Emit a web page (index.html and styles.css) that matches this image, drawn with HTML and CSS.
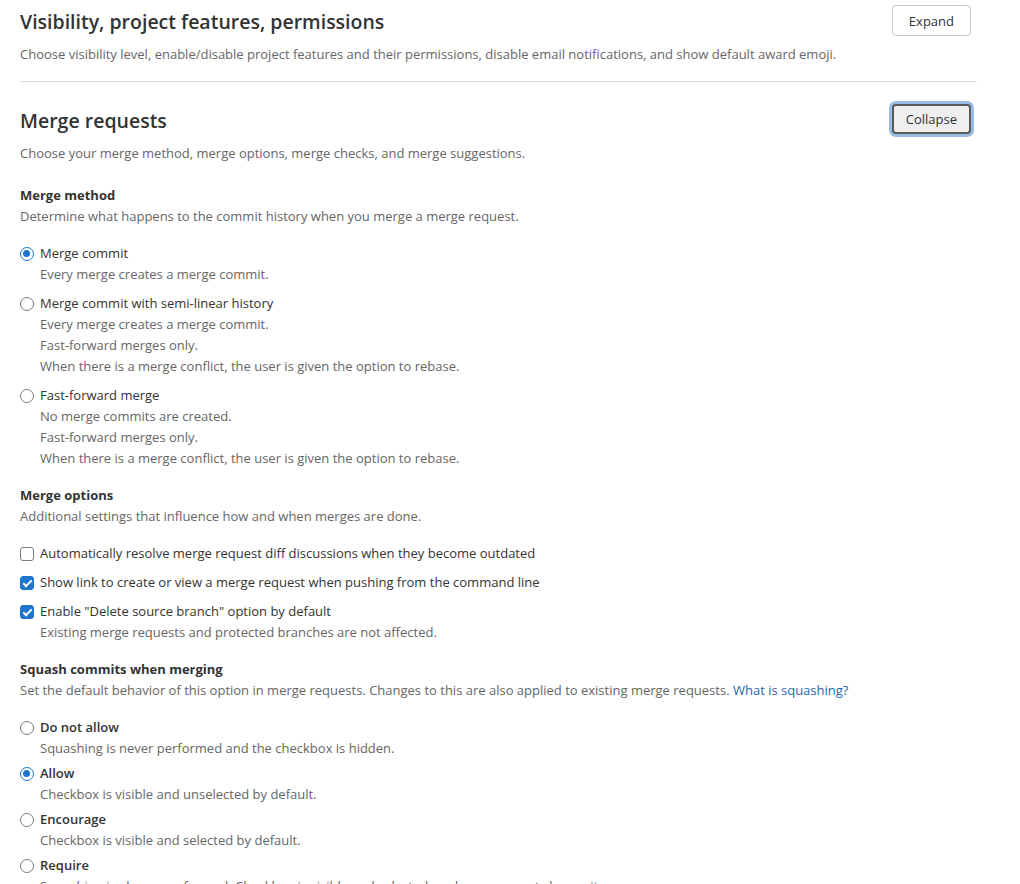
FILE: index.html
```html
<!DOCTYPE html>
<html lang="en">
<head>
    <meta charset="UTF-8">
    <meta name="viewport" content="width=device-width, initial-scale=1.0">
    <title>Merge requests settings</title>
    <link rel="stylesheet" href="styles.css">
</head>
<body>

    <section class="settings">
        <div class="settings-header">
            <div>
                <h4>Visibility, project features, permissions</h4>
                <p class="help">Choose visibility level, enable/disable project features and their permissions, disable email notifications, and show default award emoji.</p>
            </div>
            <button class="button">Expand</button>
        </div>
    </section>

    <section class="settings expanded">
        <div class="settings-header">
            <div>
                <h4>Merge requests</h4>
                <p class="help">Choose your merge method, merge options, merge checks, and merge suggestions.</p>
            </div>
            <button class="button focused">Collapse</button>
        </div>

        <div class="group">
            <div class="legend">Merge method</div>
            <p class="help">Determine what happens to the commit history when you merge a merge request.</p>
            <div class="options">
                <div class="option">
                    <span class="radio checked"></span>
                    <div>
                        <div class="label">Merge commit</div>
                        <p class="help">Every merge creates a merge commit.</p>
                    </div>
                </div>
                <div class="option">
                    <span class="radio"></span>
                    <div>
                        <div class="label">Merge commit with semi-linear history</div>
                        <p class="help">Every merge creates a merge commit.</p>
                        <p class="help">Fast-forward merges only.</p>
                        <p class="help">When there is a merge conflict, the user is given the option to rebase.</p>
                    </div>
                </div>
                <div class="option">
                    <span class="radio"></span>
                    <div>
                        <div class="label">Fast-forward merge</div>
                        <p class="help">No merge commits are created.</p>
                        <p class="help">Fast-forward merges only.</p>
                        <p class="help">When there is a merge conflict, the user is given the option to rebase.</p>
                    </div>
                </div>
            </div>
        </div>

        <div class="group">
            <div class="legend">Merge options</div>
            <p class="help">Additional settings that influence how and when merges are done.</p>
            <div class="options">
                <div class="option">
                    <span class="checkbox"></span>
                    <div>
                        <div class="label">Automatically resolve merge request diff discussions when they become outdated</div>
                    </div>
                </div>
                <div class="option">
                    <span class="checkbox checked"></span>
                    <div>
                        <div class="label">Show link to create or view a merge request when pushing from the command line</div>
                    </div>
                </div>
                <div class="option">
                    <span class="checkbox checked"></span>
                    <div>
                        <div class="label">Enable "Delete source branch" option by default</div>
                        <p class="help">Existing merge requests and protected branches are not affected.</p>
                    </div>
                </div>
            </div>
        </div>

        <div class="group">
            <div class="legend">Squash commits when merging</div>
            <p class="help">Set the default behavior of this option in merge requests. Changes to this are also applied to existing merge requests. <a href="#">What is squashing?</a></p>
            <div class="options tight">
                <div class="option">
                    <span class="radio"></span>
                    <div>
                        <div class="label strong">Do not allow</div>
                        <p class="help">Squashing is never performed and the checkbox is hidden.</p>
                    </div>
                </div>
                <div class="option">
                    <span class="radio checked"></span>
                    <div>
                        <div class="label strong">Allow</div>
                        <p class="help">Checkbox is visible and unselected by default.</p>
                    </div>
                </div>
                <div class="option">
                    <span class="radio"></span>
                    <div>
                        <div class="label strong">Encourage</div>
                        <p class="help">Checkbox is visible and selected by default.</p>
                    </div>
                </div>
                <div class="option">
                    <span class="radio"></span>
                    <div>
                        <div class="label strong">Require</div>
                        <p class="help">Squashing is always performed. Checkbox is visible and selected, and users cannot change it.</p>
                    </div>
                </div>
            </div>
        </div>
    </section>

</body>
</html>
```

FILE: styles.css
```css
body {
    font-family: "Open Sans", "Noto Sans", sans-serif;
    font-size: 13px;
    line-height: 21px;
    color: #333;
    margin: 0;
    padding: 0 43px 0 20px;
    background: #fff;
}

p {
    margin: 0;
}

.settings {
    border-bottom: 1px solid #dcdcde;
    padding: 8px 0 16px;
}

.settings.expanded {
    border-bottom: none;
    padding-top: 25px;
}

.settings-header {
    display: flex;
    justify-content: space-between;
    align-items: flex-start;
}

.settings-header h4 {
    font-size: 19.5px;
    font-weight: 600;
    line-height: 28px;
    margin: 0 0 8px;
    color: #333;
}

.help {
    color: #666;
}

.help a {
    color: #1f68b3;
    text-decoration: none;
}

.button {
    font-family: inherit;
    font-size: 13px;
    color: #333;
    background: #fff;
    border: 1px solid #c8c8c8;
    border-radius: 4px;
    padding: 0 16px;
    height: 31px;
    margin: -3px 6px 0 0;
    cursor: pointer;
}

.button.focused {
    background: #efefef;
    border: 2px solid #5a5a5a;
    box-shadow: 0 0 0 3px #98bde3;
    height: 30px;
    margin-top: -3px;
    padding: 0 12px;
}

.group {
    margin-top: 21px;
}

.group + .group {
    margin-top: 16px;
}

.legend {
    font-weight: 700;
}

.options {
    display: flex;
    flex-direction: column;
    gap: 8px;
    margin-top: 16px;
}

.options.tight {
    gap: 4px;
}

.option {
    display: flex;
    gap: 6px;
}

.label.strong {
    font-weight: 600;
}

.radio,
.checkbox {
    flex: none;
    box-sizing: border-box;
    width: 14px;
    height: 14px;
    margin-top: 4px;
    border: 1.5px solid #7a7a7a;
    position: relative;
}

.radio {
    border-radius: 50%;
}

.radio.checked {
    border-color: #1f75cb;
}

.radio.checked::after {
    content: "";
    position: absolute;
    left: 2px;
    top: 2px;
    width: 7px;
    height: 7px;
    border-radius: 50%;
    background: #1f75cb;
}

.checkbox {
    border-radius: 3px;
}

.checkbox.checked {
    background: #1f75cb;
    border-color: #1f75cb;
}

.checkbox.checked::after {
    content: "";
    position: absolute;
    left: 3.5px;
    top: 0.5px;
    width: 3px;
    height: 7px;
    border: solid #fff;
    border-width: 0 2px 2px 0;
    transform: rotate(45deg);
}
```
